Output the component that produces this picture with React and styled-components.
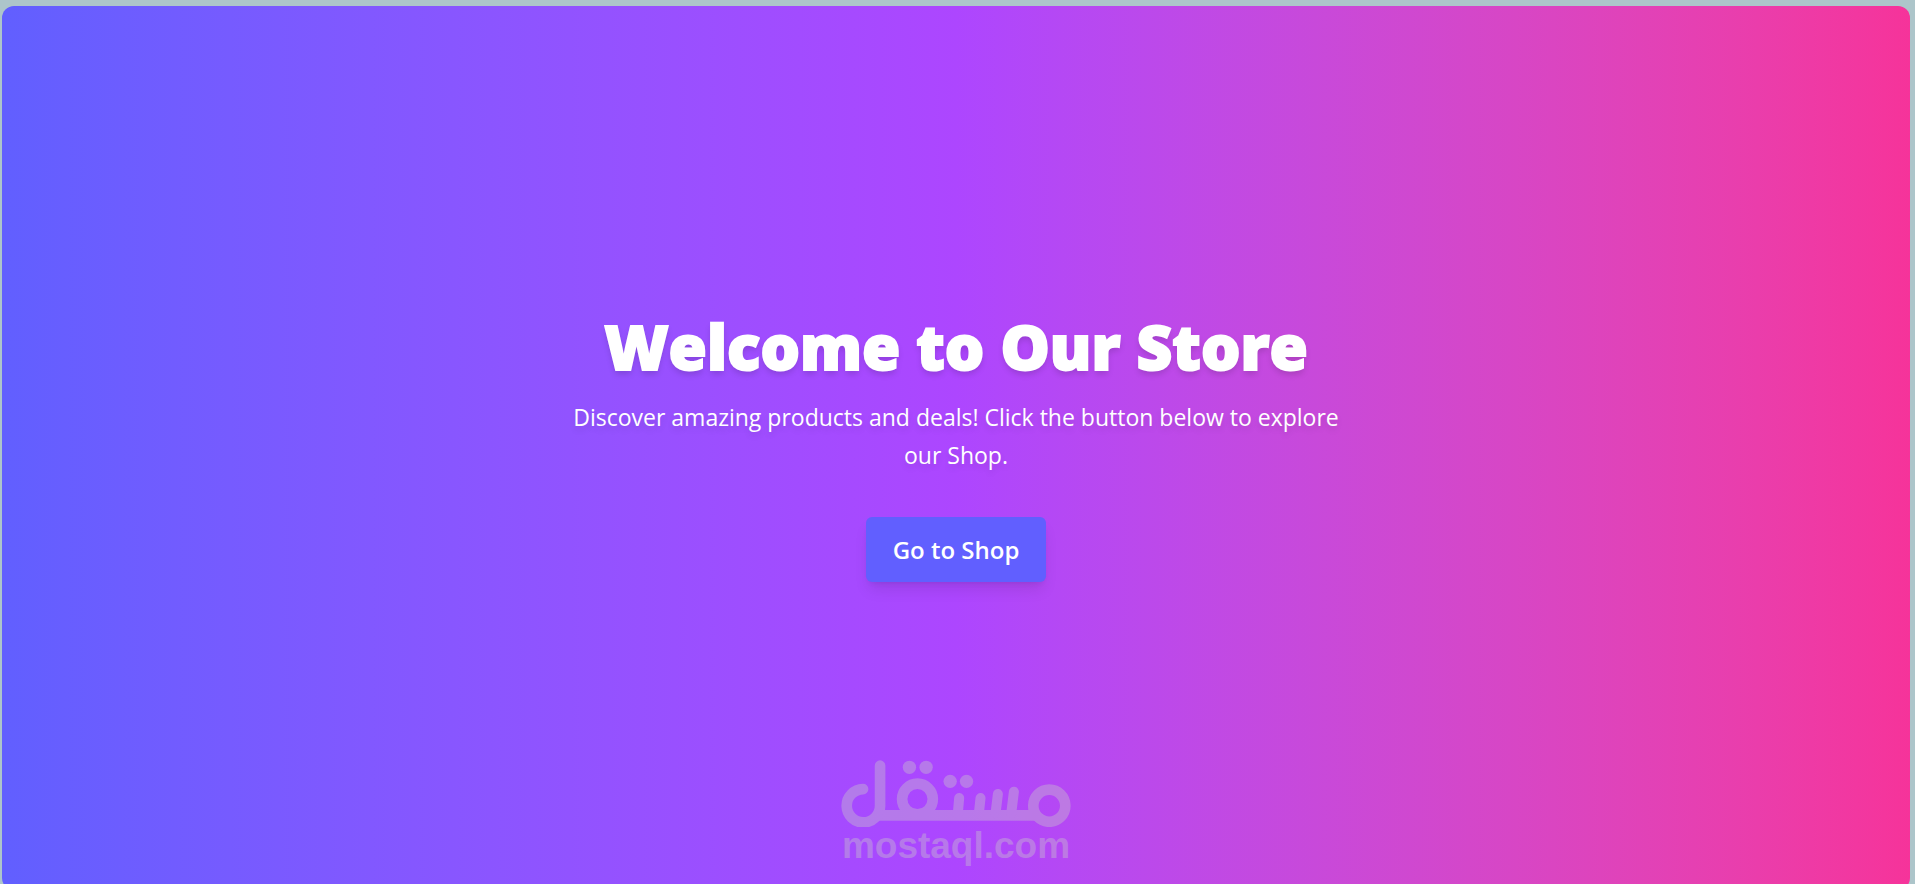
import React from "react";
import styled, { createGlobalStyle } from "styled-components";

const GlobalStyle = createGlobalStyle`
  * {
    box-sizing: border-box;
  }
  body {
    margin: 0;
    height: 100vh;
    overflow: hidden;
    background: #adc5ca;
    font-family: "Open Sans", "Noto Sans", sans-serif;
  }
`;

const Logo = () => (
  <svg viewBox="36 30 689 202" aria-hidden="true">
    <g fill="none" stroke="currentColor" strokeWidth="32">
      <path d="M102 117A50 50 0 1 0 153 167V47" strokeLinecap="round" />
      <path d="M138 196H628" />
      <circle cx="265" cy="147" r="46" />
      <circle cx="660" cy="167" r="48" />
      <path
        d="M390 144L386 190M454 144L449 190M506 132L499 190M554 125L546 190"
        strokeWidth="30"
        strokeLinecap="round"
      />
    </g>
    <g fill="currentColor">
      <circle cx="241" cy="52" r="20" />
      <circle cx="291" cy="52" r="20" />
      <circle cx="363" cy="94" r="20" />
      <circle cx="412" cy="94" r="20" />
    </g>
  </svg>
);

const App = () => {
  return (
    <Page>
      <GlobalStyle />
      <Hero>
        <Title>Welcome to Our Store</Title>
        <Text>
          Discover amazing products and deals! Click the button below to explore
          our Shop.
        </Text>
        <ShopButton type="button">Go to Shop</ShopButton>
        <Watermark>
          <Logo />
          <span>mostaql.com</span>
        </Watermark>
      </Hero>
    </Page>
  );
};

export default App;

const Page = styled.main`
  padding: 6px 5px 0 2px;
`;

const Hero = styled.section`
  position: relative;
  min-height: 100vh;
  display: flex;
  flex-direction: column;
  align-items: center;
  justify-content: center;
  border-radius: 12px;
  color: #ffffff;
  text-align: center;
  background: linear-gradient(to right in oklab, #615fff, #ad46ff, #f6339a);
`;

const Title = styled.h1`
  margin: 0 0 20px;
  font-weight: 800;
  font-size: 62px;
  line-height: 64px;
  -webkit-text-stroke: 2px #ffffff;
  text-shadow: 0 4px 6px rgba(0, 0, 0, 0.15);
`;

const Text = styled.p`
  max-width: 780px;
  margin: 0 0 43px;
  font-size: 23px;
  line-height: 38px;
  text-shadow: 0 4px 6px rgba(0, 0, 0, 0.1);
`;

const ShopButton = styled.button`
  padding: 16px 27px;
  border: none;
  border-radius: 6px;
  background: #615fff;
  color: #ffffff;
  font-family: inherit;
  font-weight: 600;
  font-size: 24px;
  line-height: 33px;
  cursor: pointer;
  box-shadow: 0 10px 15px -3px rgba(0, 0, 0, 0.1),
    0 4px 6px -4px rgba(0, 0, 0, 0.1);
`;

const Watermark = styled.div`
  position: absolute;
  bottom: 26px;
  left: 50%;
  transform: translateX(-50%);
  width: 230px;
  display: flex;
  flex-direction: column;
  align-items: center;
  color: #cacaca;
  opacity: 0.38;
  pointer-events: none;

  svg {
    display: block;
    width: 100%;
  }
  span {
    font-family: "Liberation Sans", Arial, sans-serif;
    font-weight: 700;
    font-size: 37px;
    line-height: 37px;
  }
`;
